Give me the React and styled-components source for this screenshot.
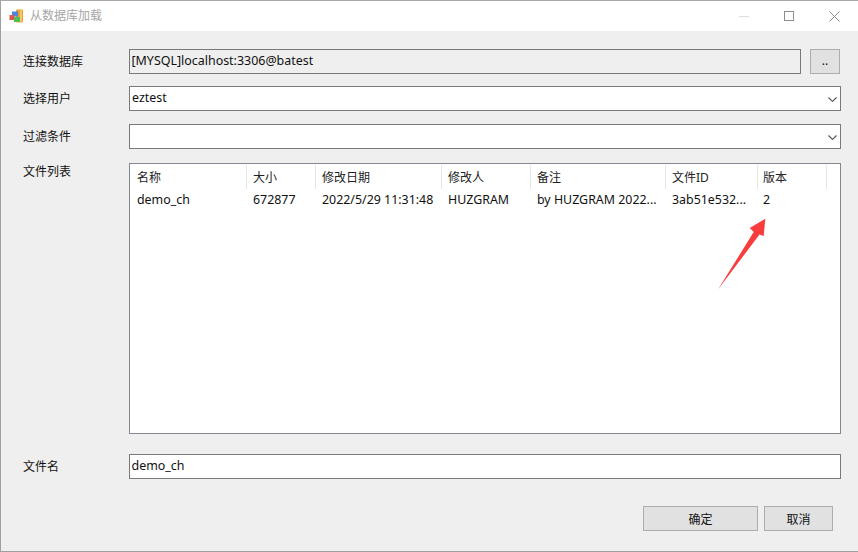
import React from "react";
import styled, { createGlobalStyle } from "styled-components";

const columns = [
  { title: "名称", width: 117 },
  { title: "大小", width: 69 },
  { title: "修改日期", width: 126 },
  { title: "修改人", width: 89 },
  { title: "备注", width: 135 },
  { title: "文件ID", width: 92 },
  { title: "版本", width: 69 },
];

const rows = [
  ["demo_ch", "672877", "2022/5/29 11:31:48", "HUZGRAM", "by HUZGRAM 2022...", "3ab51e532...", "2"],
];

export default function App() {
  return (
    <>
      <GlobalStyle />
      <Dialog>
        <TitleBar>
          <AppIcon />
          <Title>从数据库加载</Title>
          <WindowButtons>
            <MinimizeIcon />
            <MaximizeIcon />
            <CloseIcon />
          </WindowButtons>
        </TitleBar>
        <Body>
          <Row $top={18}>
            <Label>连接数据库</Label>
            <ReadOnlyField>[MYSQL]localhost:3306@batest</ReadOnlyField>
            <BrowseButton>..</BrowseButton>
          </Row>
          <Row $top={12}>
            <Label>选择用户</Label>
            <Select>
              eztest
              <Chevron />
            </Select>
          </Row>
          <Row $top={13}>
            <Label>过滤条件</Label>
            <Select>
              <Chevron />
            </Select>
          </Row>
          <ListRow>
            <ListLabel>文件列表</ListLabel>
            <ListBox>
              <HeaderRow>
                {columns.map((c) => (
                  <HeaderCell key={c.title} style={{ width: c.width }}>
                    {c.title}
                  </HeaderCell>
                ))}
              </HeaderRow>
              {rows.map((r) => (
                <DataRow key={r[0]}>
                  {r.map((text, i) => (
                    <DataCell key={i} style={{ width: columns[i].width }}>
                      {text}
                    </DataCell>
                  ))}
                </DataRow>
              ))}
              <Arrow />
            </ListBox>
          </ListRow>
          <Row $top={20}>
            <Label>文件名</Label>
            <TextField>demo_ch</TextField>
          </Row>
          <Footer>
            <OkButton>确定</OkButton>
            <CancelButton>取消</CancelButton>
          </Footer>
        </Body>
      </Dialog>
    </>
  );
}

function AppIcon() {
  return (
    <IconSvg width="15" height="15" viewBox="0 0 15 15">
      <rect x="7" y="0.5" width="7" height="13" rx="1" fill="#eba12e" />
      <rect x="11" y="1" width="2" height="12" fill="#f7c76a" />
      <rect x="3" y="2.5" width="6" height="5" fill="#4a86e0" />
      <rect x="0.5" y="6" width="5" height="5" fill="#e0564a" />
      <rect x="5" y="8" width="6" height="5" fill="#52bd55" />
    </IconSvg>
  );
}

function MinimizeIcon() {
  return (
    <svg width="10" height="10" viewBox="0 0 10 10">
      <path d="M0 5.5H10" stroke="#dedede" strokeWidth="1" />
    </svg>
  );
}

function MaximizeIcon() {
  return (
    <svg width="10" height="10" viewBox="0 0 10 10">
      <rect x="0.5" y="0.5" width="9" height="9" fill="none" stroke="#8c8c8c" />
    </svg>
  );
}

function CloseIcon() {
  return (
    <svg width="11" height="11" viewBox="0 0 11 11">
      <path d="M0.5 0.5L10.5 10.5M10.5 0.5L0.5 10.5" stroke="#8c8c8c" strokeWidth="1" />
    </svg>
  );
}

function Chevron() {
  return (
    <ChevronSvg width="9" height="5" viewBox="0 0 9 5">
      <path d="M0.5 0.5L4.5 4.4L8.5 0.5" fill="none" stroke="#555" strokeWidth="1.1" />
    </ChevronSvg>
  );
}

function Arrow() {
  return (
    <ArrowSvg width="60" height="80" viewBox="0 0 60 80">
      <path d="M48.3 1.7L46.7 19L42.5 17.5L1 72.5L36.7 15L32.7 11Z" fill="#f93c3c" />
    </ArrowSvg>
  );
}

const GlobalStyle = createGlobalStyle`
  html, body {
    margin: 0;
    padding: 0;
    background: #efefef;
  }
  * {
    box-sizing: border-box;
  }
`;

const Dialog = styled.div`
  width: 858px;
  height: 552px;
  display: flex;
  flex-direction: column;
  border-top: 1px solid #a8a8a8;
  border-left: 1px solid #a0a0a0;
  border-bottom: 1px solid #a0a0a0;
  font-family: "Noto Sans", "Noto Sans CJK SC", sans-serif;
  font-size: 12px;
  color: #111;
  overflow: hidden;
`;

const TitleBar = styled.div`
  height: 30px;
  flex: none;
  display: flex;
  align-items: center;
  background: #fff;
  padding-left: 8px;
`;

const IconSvg = styled.svg`
  flex: none;
  margin-right: 6px;
`;

const Title = styled.div`
  color: #a6a6a6;
  font-size: 12px;
  padding-bottom: 2px;
`;

const WindowButtons = styled.div`
  margin-left: auto;
  padding-right: 18px;
  display: flex;
  align-items: center;
  gap: 35px;

  svg {
    display: block;
  }
`;

const Body = styled.div`
  flex: 1;
  display: flex;
  flex-direction: column;
  padding-left: 22px;
  background: #efefef;
`;

const Row = styled.div`
  display: flex;
  align-items: center;
  height: 25px;
  margin-top: ${(p) => p.$top}px;
`;

const Label = styled.div`
  width: 106px;
  flex: none;
  padding-bottom: 2px;
`;

const Field = styled.div`
  height: 25px;
  display: flex;
  align-items: center;
  border: 1px solid #7a7a7a;
  padding: 0 0 2px 1px;
  font-size: 12.45px;
  position: relative;
`;

const ReadOnlyField = styled(Field)`
  width: 672px;
  background: #efefef;
  padding-left: 1.5px;
`;

const TextField = styled(Field)`
  width: 712px;
  background: #fff;
  padding-left: 1.5px;
`;

const Select = styled(Field)`
  width: 712px;
  background: #fff;
  padding-left: 2px;
`;

const ChevronSvg = styled.svg`
  position: absolute;
  right: 3px;
  top: 10px;
`;

const PushButton = styled.div`
  height: 25px;
  display: flex;
  align-items: center;
  justify-content: center;
  background: #e1e1e1;
  border: 1px solid #adadad;
`;

const BrowseButton = styled(PushButton)`
  width: 30px;
  margin-left: 9px;
  padding-bottom: 2px;
`;

const ListRow = styled.div`
  display: flex;
  margin-top: 14px;
`;

const ListLabel = styled(Label)`
  margin-top: -1px;
  padding-bottom: 0;
`;

const ListBox = styled.div`
  position: relative;
  width: 712px;
  height: 271px;
  background: #fff;
  border: 1px solid #828790;
`;

const HeaderRow = styled.div`
  display: flex;
  height: 25px;
  padding-top: 1px;
`;

const HeaderCell = styled.div`
  height: 24px;
  display: flex;
  align-items: center;
  padding-left: 6px;
  border-right: 1px solid #e5e5e5;
  color: #222;

  &:first-child {
    padding-left: 7px;
  }

  &:last-child {
    padding-left: 5px;
  }
`;

const DataRow = styled.div`
  display: flex;
  height: 20px;
  align-items: center;
  font-size: 12.4px;
`;

const DataCell = styled.div`
  padding-left: 6px;
  white-space: nowrap;
  overflow: hidden;

  &:first-child {
    padding-left: 7px;
  }

  &:last-child {
    padding-left: 5px;
  }
`;

const ArrowSvg = styled.svg`
  position: absolute;
  left: 587px;
  top: 53px;
`;

const Footer = styled.div`
  display: flex;
  margin-top: 27px;
  padding-left: 620px;
  gap: 6px;
`;

const OkButton = styled(PushButton)`
  width: 115px;
`;

const CancelButton = styled(PushButton)`
  width: 69px;
`;
